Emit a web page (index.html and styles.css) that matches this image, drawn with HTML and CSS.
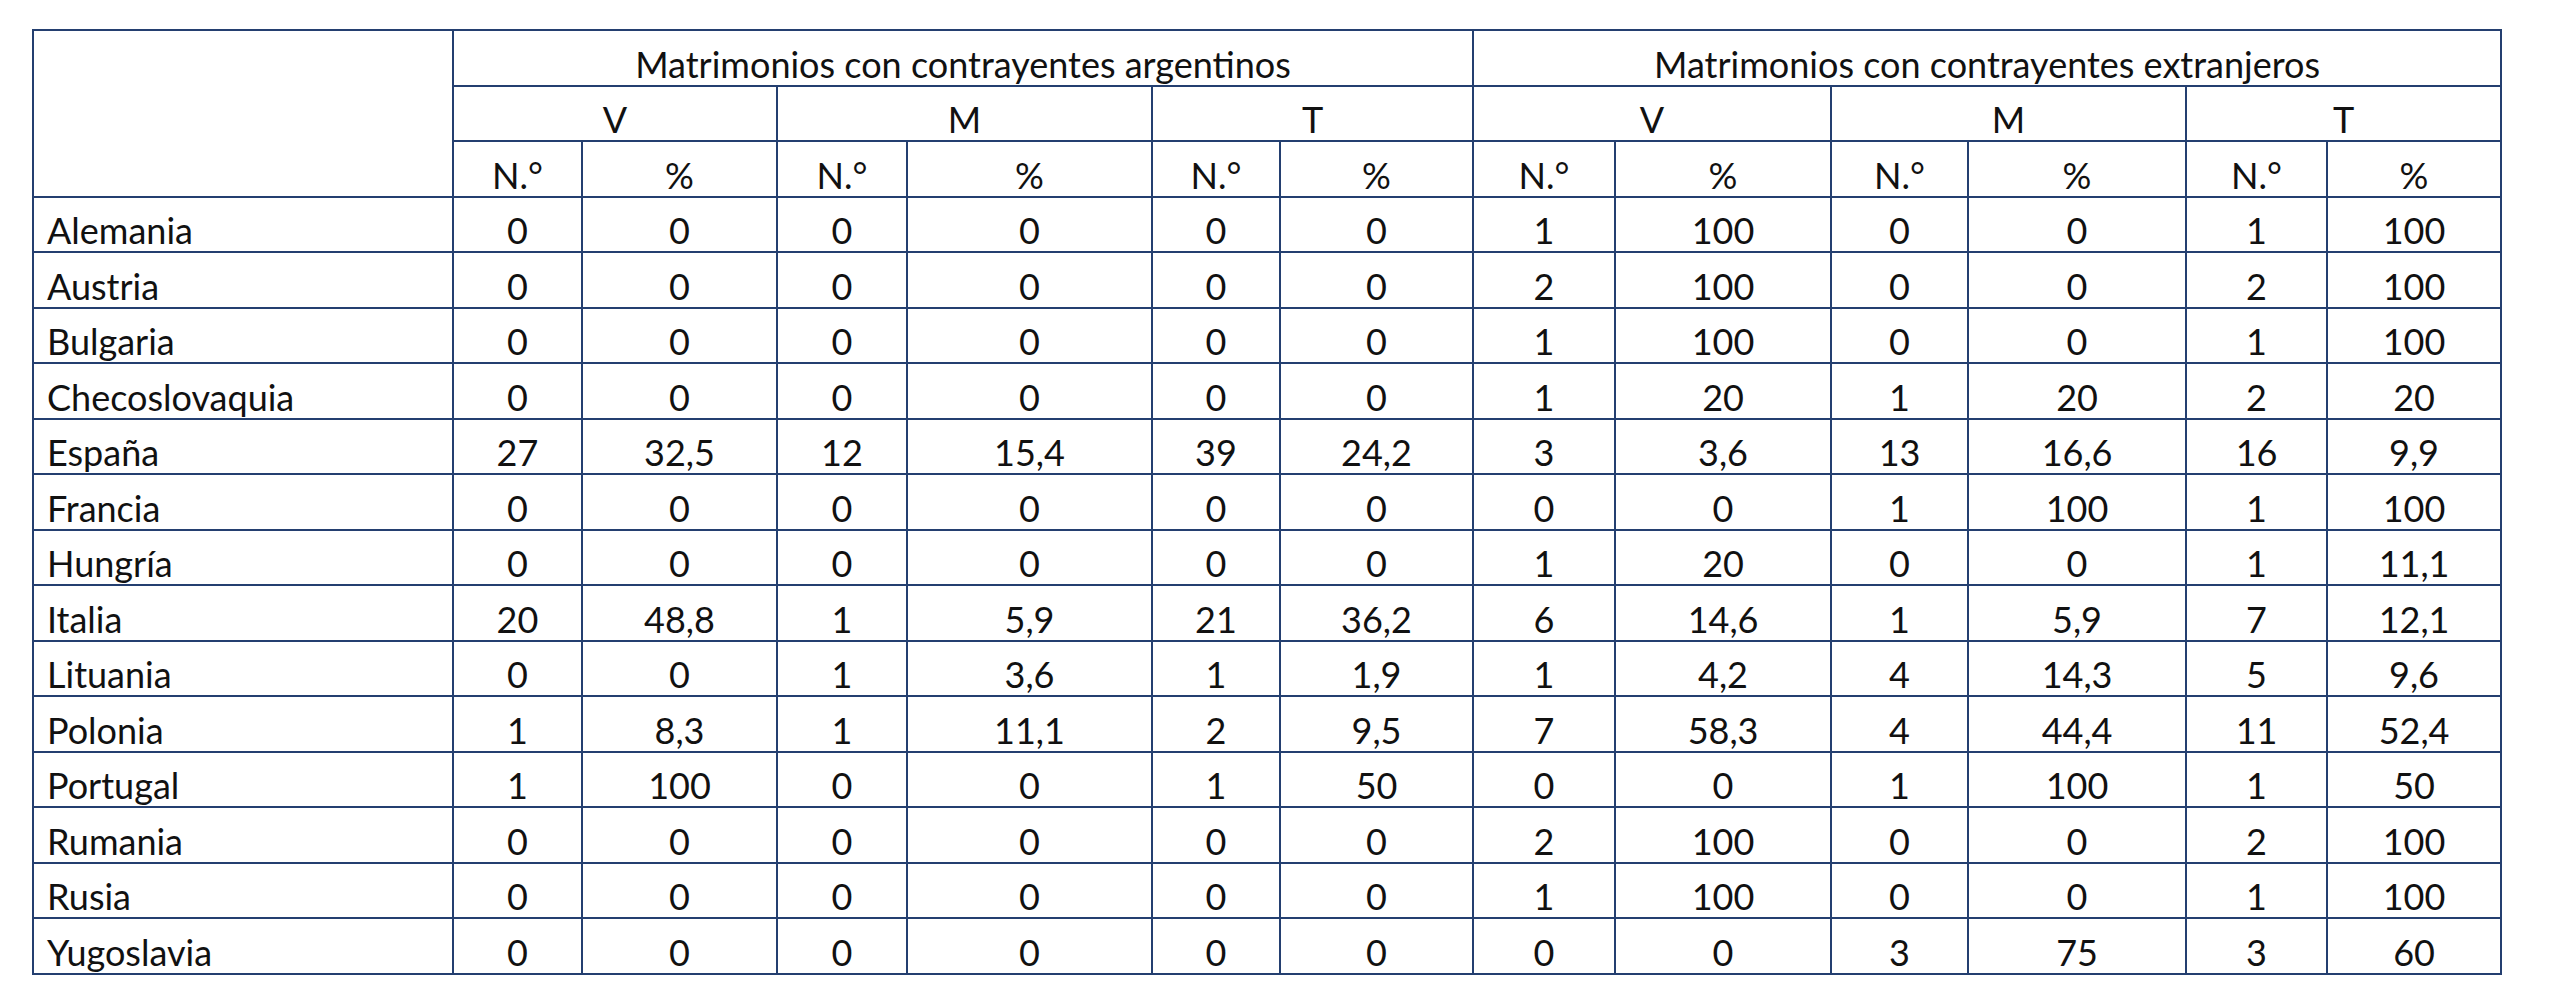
FILE: index.html
```html
<!DOCTYPE html>
<html lang="es">
<head>
<meta charset="utf-8">
<title>Matrimonios</title>
<link rel="stylesheet" href="styles.css">
</head>
<body>
<table class="tabla">
  <colgroup>
    <col class="c-label">
    <col class="c-an1"><col class="c-ap1">
    <col class="c-an2"><col class="c-ap2">
    <col class="c-an3"><col class="c-ap3">
    <col class="c-en1"><col class="c-ep1">
    <col class="c-en2"><col class="c-ep2">
    <col class="c-en3"><col class="c-ep3">
  </colgroup>
  <thead>
    <tr>
      <th rowspan="3" class="corner"></th>
      <th colspan="6">Matrimonios con contrayentes argentinos</th>
      <th colspan="6">Matrimonios con contrayentes extranjeros</th>
    </tr>
    <tr>
      <th colspan="2">V</th><th colspan="2">M</th><th colspan="2">T</th>
      <th colspan="2">V</th><th colspan="2">M</th><th colspan="2">T</th>
    </tr>
    <tr>
      <th>N.°</th><th>%</th><th>N.°</th><th>%</th><th>N.°</th><th>%</th>
      <th>N.°</th><th>%</th><th>N.°</th><th>%</th><th>N.°</th><th>%</th>
    </tr>
  </thead>
  <tbody>
    <tr><td class="lbl">Alemania</td><td>0</td><td>0</td><td>0</td><td>0</td><td>0</td><td>0</td><td>1</td><td>100</td><td>0</td><td>0</td><td>1</td><td>100</td></tr>
    <tr><td class="lbl">Austria</td><td>0</td><td>0</td><td>0</td><td>0</td><td>0</td><td>0</td><td>2</td><td>100</td><td>0</td><td>0</td><td>2</td><td>100</td></tr>
    <tr><td class="lbl">Bulgaria</td><td>0</td><td>0</td><td>0</td><td>0</td><td>0</td><td>0</td><td>1</td><td>100</td><td>0</td><td>0</td><td>1</td><td>100</td></tr>
    <tr><td class="lbl">Checoslovaquia</td><td>0</td><td>0</td><td>0</td><td>0</td><td>0</td><td>0</td><td>1</td><td>20</td><td>1</td><td>20</td><td>2</td><td>20</td></tr>
    <tr><td class="lbl">España</td><td>27</td><td>32,5</td><td>12</td><td>15,4</td><td>39</td><td>24,2</td><td>3</td><td>3,6</td><td>13</td><td>16,6</td><td>16</td><td>9,9</td></tr>
    <tr><td class="lbl">Francia</td><td>0</td><td>0</td><td>0</td><td>0</td><td>0</td><td>0</td><td>0</td><td>0</td><td>1</td><td>100</td><td>1</td><td>100</td></tr>
    <tr><td class="lbl">Hungría</td><td>0</td><td>0</td><td>0</td><td>0</td><td>0</td><td>0</td><td>1</td><td>20</td><td>0</td><td>0</td><td>1</td><td>11,1</td></tr>
    <tr><td class="lbl">Italia</td><td>20</td><td>48,8</td><td>1</td><td>5,9</td><td>21</td><td>36,2</td><td>6</td><td>14,6</td><td>1</td><td>5,9</td><td>7</td><td>12,1</td></tr>
    <tr><td class="lbl">Lituania</td><td>0</td><td>0</td><td>1</td><td>3,6</td><td>1</td><td>1,9</td><td>1</td><td>4,2</td><td>4</td><td>14,3</td><td>5</td><td>9,6</td></tr>
    <tr><td class="lbl">Polonia</td><td>1</td><td>8,3</td><td>1</td><td>11,1</td><td>2</td><td>9,5</td><td>7</td><td>58,3</td><td>4</td><td>44,4</td><td>11</td><td>52,4</td></tr>
    <tr><td class="lbl">Portugal</td><td>1</td><td>100</td><td>0</td><td>0</td><td>1</td><td>50</td><td>0</td><td>0</td><td>1</td><td>100</td><td>1</td><td>50</td></tr>
    <tr><td class="lbl">Rumania</td><td>0</td><td>0</td><td>0</td><td>0</td><td>0</td><td>0</td><td>2</td><td>100</td><td>0</td><td>0</td><td>2</td><td>100</td></tr>
    <tr><td class="lbl">Rusia</td><td>0</td><td>0</td><td>0</td><td>0</td><td>0</td><td>0</td><td>1</td><td>100</td><td>0</td><td>0</td><td>1</td><td>100</td></tr>
    <tr><td class="lbl">Yugoslavia</td><td>0</td><td>0</td><td>0</td><td>0</td><td>0</td><td>0</td><td>0</td><td>0</td><td>3</td><td>75</td><td>3</td><td>60</td></tr>
  </tbody>
</table>
</body>
</html>
```

FILE: styles.css
```css
html, body {
  margin: 0;
  padding: 0;
  background: #ffffff;
}

body {
  padding: 29px 0 0 32px;
  font-family: Lato, "Open Sans", sans-serif;
  color: #111111;
}

.tabla {
  border-collapse: collapse;
  table-layout: fixed;
  width: 2468px;
  font-size: 36px;
}

.c-label { width: 420px; }
.c-an1 { width: 129px; }
.c-ap1 { width: 195px; }
.c-an2 { width: 130px; }
.c-ap2 { width: 245px; }
.c-an3 { width: 128px; }
.c-ap3 { width: 193px; }
.c-en1 { width: 142px; }
.c-ep1 { width: 216px; }
.c-en2 { width: 137px; }
.c-ep2 { width: 218px; }
.c-en3 { width: 141px; }
.c-ep3 { width: 174px; }

.tabla tr {
  height: 55.5px;
}

.tabla th,
.tabla td {
  border: 2px solid #243f70;
  padding: 0;
  font-weight: 400;
  text-align: center;
  vertical-align: bottom;
  line-height: 42px;
  white-space: nowrap;
}

.tabla td.lbl {
  text-align: left;
  padding-left: 13px;
}
```
